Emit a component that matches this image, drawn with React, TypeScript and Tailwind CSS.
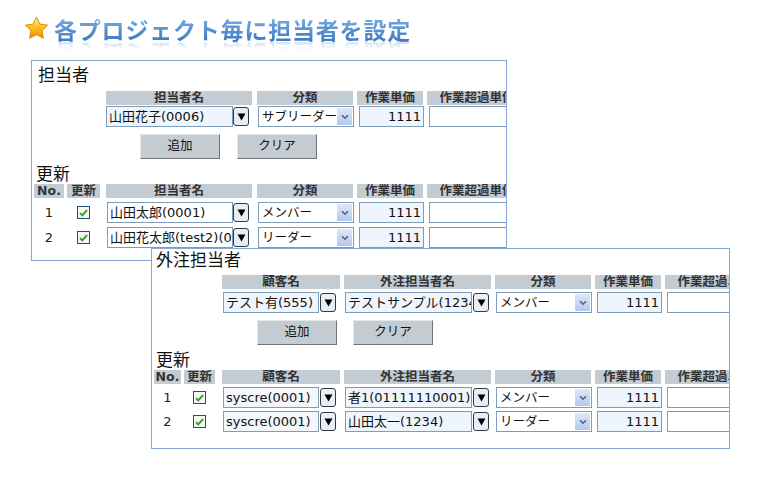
import React from 'react';

const jp = "font-['DejaVu_Sans','Noto_Sans_CJK_JP',sans-serif]";

const Star = () => (
  <svg width="25" height="25" viewBox="0 0 24 24">
    <defs>
      <linearGradient id="starFill" x1="0" y1="0" x2="0" y2="1">
        <stop offset="0" stopColor="#fff6b0" />
        <stop offset="0.45" stopColor="#fcc51e" />
        <stop offset="1" stopColor="#f28a00" />
      </linearGradient>
    </defs>
    <path
      d="M12 1l3.3 6.8 7.4 1-5.4 5.2 1.3 7.4L12 17.9l-6.6 3.5 1.3-7.4L1.3 8.8l7.4-1z"
      fill="url(#starFill)"
      stroke="#d98409"
      strokeWidth="0.9"
      strokeLinejoin="round"
    />
  </svg>
);

const Head = ({ className = '', children }: { className?: string; children?: React.ReactNode }) => (
  <div className={`h-[14px] shrink-0 overflow-hidden whitespace-nowrap bg-[#c3ccd3] text-center text-[12.5px] font-bold leading-[14px] text-[#333] ${className}`}>
    {children}
  </div>
);

const Box = ({ className = '', children }: { className?: string; children?: React.ReactNode }) => (
  <div className={`h-[21px] shrink-0 overflow-hidden whitespace-nowrap border border-[#7f9db9] px-[2px] text-[13px] leading-[19px] text-[#111] ${className}`}>
    {children}
  </div>
);

const Drop = ({ className = '' }: { className?: string }) => (
  <div className={`flex h-[19px] w-[16px] shrink-0 items-center justify-center rounded-[3px] border border-[#2f3b4c] bg-[#e8eef4] ${className}`}>
    <svg width="9" height="8" viewBox="0 0 9 8">
      <path d="M0.5 0.5h8L4.5 7.5z" fill="#000" />
    </svg>
  </div>
);

const Select = ({ className = '', value }: { className?: string; value: string }) => (
  <div className={`flex h-[21px] w-[96px] shrink-0 border border-[#7f9db9] bg-white ${className}`}>
    <div className="flex-1 overflow-hidden whitespace-nowrap pl-[3px] text-[12.5px] leading-[19px] text-[#111]">{value}</div>
    <div className="m-px flex w-[15px] items-center justify-center rounded-[1px] bg-linear-to-b from-[#dfe8f9] to-[#b4c7ef]">
      <svg width="8" height="6" viewBox="0 0 8 6">
        <path d="M1 1.2l3 3 3-3" fill="none" stroke="#4d6185" strokeWidth="1.6" />
      </svg>
    </div>
  </div>
);

const Check = () => (
  <div className="flex h-[13px] w-[13px] shrink-0 items-center justify-center border border-[#1c5180] bg-[#f5f5f1]">
    <svg width="9" height="8" viewBox="0 0 9 8">
      <path d="M1 4l2.3 2.4L8 1.2" fill="none" stroke="#21a121" strokeWidth="1.8" />
    </svg>
  </div>
);

const Btn = ({ className = '', children }: { className?: string; children: React.ReactNode }) => (
  <div className={`flex h-[25px] w-[80px] shrink-0 items-center justify-center border border-t-[#e4e8eb] border-l-[#e4e8eb] border-r-[#6f7377] border-b-[#6f7377] bg-[#c4ccd2] text-[12.5px] text-[#111] ${className}`}>
    {children}
  </div>
);

const SectionTitle = ({ className = '', children }: { className?: string; children: React.ReactNode }) => (
  <div className={`text-[17px] leading-[20px] text-[#111] ${className}`}>{children}</div>
);

const StaffPanel = () => (
  <div className={`absolute left-[31px] top-[60px] h-[201px] w-[476px] overflow-hidden border border-[#86a8d6] bg-white ${jp}`}>
    <SectionTitle className="ml-[6px] mt-[4px]">担当者</SectionTitle>

    <div className="mt-[6px] flex">
      <Head className="ml-[74px] w-[146px]">担当者名</Head>
      <Head className="ml-[5px] w-[96px]">分類</Head>
      <Head className="ml-[4px] w-[66px]">作業単価</Head>
      <Head className="ml-[4px] w-[100px]">作業超過単価</Head>
    </div>
    <div className="mt-[1px] flex items-center">
      <Box className="ml-[74px] w-[127px] bg-[#eef5fd]">山田花子(0006)</Box>
      <Drop />
      <Select className="ml-[9px] w-[95px]" value="サブリーダー" />
      <Box className="ml-[5px] w-[65px] bg-[#eef5fd] text-right">1111</Box>
      <Box className="ml-[5px] w-[100px] bg-white" />
    </div>
    <div className="mt-[7px] flex">
      <Btn className="ml-[108px]">追加</Btn>
      <Btn className="ml-[17px]">クリア</Btn>
    </div>

    <SectionTitle className="ml-[4px] mt-[5px] leading-[18px]">更新</SectionTitle>
    <div className="flex">
      <Head className="ml-[2px] w-[30px]">No.</Head>
      <Head className="ml-[3px] w-[33px]">更新</Head>
      <Head className="ml-[6px] w-[146px]">担当者名</Head>
      <Head className="ml-[5px] w-[96px]">分類</Head>
      <Head className="ml-[4px] w-[66px]">作業単価</Head>
      <Head className="ml-[4px] w-[100px]">作業超過単価</Head>
    </div>
    <div className="mt-[4px] flex flex-col gap-[4px]">
      {[
        { no: '1', name: '山田太郎(0001)', kind: 'メンバー' },
        { no: '2', name: '山田花太郎(test2)(0002)', kind: 'リーダー' },
      ].map((r) => (
        <div key={r.no} className="flex items-center">
          <div className="ml-[2px] w-[30px] shrink-0 text-center text-[13px] text-[#222]">{r.no}</div>
          <div className="ml-[3px] flex w-[33px] shrink-0 justify-center">
            <Check />
          </div>
          <Box className="ml-[7px] w-[126px] bg-white">{r.name}</Box>
          <Drop />
          <Select className="ml-[9px] w-[95px]" value={r.kind} />
          <Box className="ml-[5px] w-[65px] bg-[#eef5fd] text-right">1111</Box>
          <Box className="ml-[5px] w-[100px] bg-white" />
        </div>
      ))}
    </div>
  </div>
);

const OutsourcePanel = () => (
  <div className={`absolute left-[151px] top-[248px] h-[201px] w-[579px] overflow-hidden border border-[#86a8d6] bg-white ${jp}`}>
    <SectionTitle className="ml-[4px] mt-[1px]">外注担当者</SectionTitle>

    <div className="mt-[5px] flex">
      <Head className="ml-[70px] w-[118px]">顧客名</Head>
      <Head className="ml-[4px] w-[147px]">外注担当者名</Head>
      <Head className="ml-[4px] w-[96px]">分類</Head>
      <Head className="ml-[4px] w-[66px]">作業単価</Head>
      <Head className="ml-[4px] w-[100px]">作業超過単価</Head>
    </div>
    <div className="mt-[3px] flex items-center">
      <Box className="ml-[71px] w-[96px] bg-[#eef5fd]">テスト有(555)</Box>
      <Drop className="ml-[1px] w-[15px]" />
      <Box className="ml-[9px] w-[127px] bg-[#eef5fd]">テストサンプル(12342)</Box>
      <Drop className="ml-[1px]" />
      <Select className="ml-[7px]" value="メンバー" />
      <Box className="ml-[5px] w-[65px] bg-[#eef5fd] text-right">1111</Box>
      <Box className="ml-[5px] w-[100px] bg-white" />
    </div>
    <div className="mt-[7px] flex">
      <Btn className="ml-[105px]">追加</Btn>
      <Btn className="ml-[16px]">クリア</Btn>
    </div>

    <SectionTitle className="ml-[4px] mt-[5px] leading-[18px]">更新</SectionTitle>
    <div className="flex">
      <Head className="ml-[2px] w-[27px]">No.</Head>
      <Head className="ml-[3px] w-[31px]">更新</Head>
      <Head className="ml-[7px] w-[118px]">顧客名</Head>
      <Head className="ml-[4px] w-[147px]">外注担当者名</Head>
      <Head className="ml-[4px] w-[96px]">分類</Head>
      <Head className="ml-[4px] w-[66px]">作業単価</Head>
      <Head className="ml-[4px] w-[100px]">作業超過単価</Head>
    </div>
    <div className="mt-[3px] flex flex-col gap-[3px]">
      {[
        { no: '1', staff: '者1(01111110001)', kind: 'メンバー' },
        { no: '2', staff: '山田太一(1234)', kind: 'リーダー' },
      ].map((r) => (
        <div key={r.no} className="flex items-center">
          <div className="ml-[2px] w-[27px] shrink-0 text-center text-[13px] text-[#222]">{r.no}</div>
          <div className="ml-[3px] flex w-[31px] shrink-0 justify-center">
            <Check />
          </div>
          <Box className="ml-[8px] w-[96px] bg-[#f4f8fd]">syscre(0001)</Box>
          <Drop className="ml-[1px] w-[15px]" />
          <Box className="ml-[9px] w-[127px] bg-[#eef5fd]">{r.staff}</Box>
          <Drop className="ml-[1px]" />
          <Select className="ml-[7px]" value={r.kind} />
          <Box className="ml-[5px] w-[65px] bg-[#eef5fd] text-right">1111</Box>
          <Box className="ml-[5px] w-[100px] bg-white" />
        </div>
      ))}
    </div>
  </div>
);

export default function App() {
  const heading = '各プロジェクト毎に担当者を設定';
  return (
    <div className="relative h-[477px] w-[761px] overflow-hidden bg-white">
      <div className="flex items-start pl-[24px] pt-[15px]">
        <div className="mt-[1px]">
          <Star />
        </div>
        <div className="ml-[5px] flex flex-col">
          <div className="bg-linear-to-b from-[#7db2e6] to-[#3a76bf] bg-clip-text text-[23px] font-bold leading-[28px] tracking-[0.8px] text-transparent font-['Noto_Sans_CJK_JP',sans-serif]">
            {heading}
          </div>
          <div aria-hidden="true" className="-mt-[3px] h-[10px] overflow-hidden opacity-30 [mask-image:linear-gradient(to_bottom,black,transparent)]">
            <div className="-scale-y-100 text-[23px] font-bold leading-[28px] tracking-[0.8px] text-[#4a86c8] font-['Noto_Sans_CJK_JP',sans-serif]">
              {heading}
            </div>
          </div>
        </div>
      </div>
      <StaffPanel />
      <OutsourcePanel />
    </div>
  );
}
